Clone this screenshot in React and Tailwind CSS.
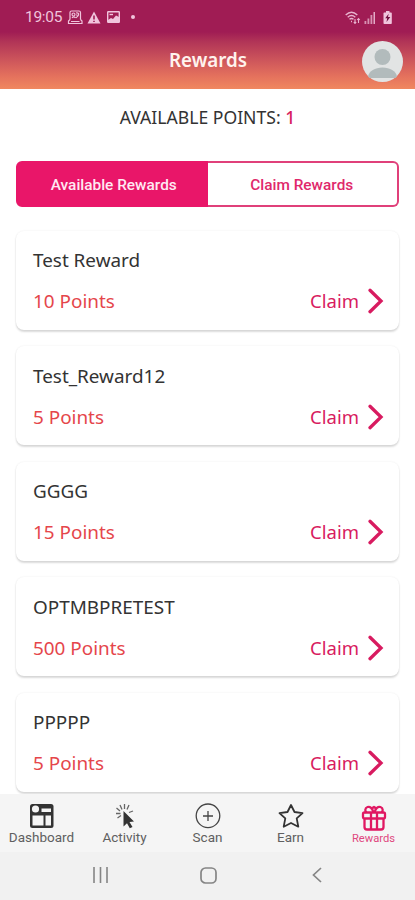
import React from "react";

const rewards = [
  { name: "Test Reward", points: "10 Points" },
  { name: "Test_Reward12", points: "5 Points" },
  { name: "GGGG", points: "15 Points" },
  { name: "OPTMBPRETEST", points: "500 Points" },
  { name: "PPPPP", points: "5 Points" },
];

function StatusBar() {
  return (
    <div className="flex h-[34px] items-center justify-between pl-[25px] pr-[22px] text-[#f0c4dc]">
      <div className="flex items-center">
        <span className="w-[38px] whitespace-nowrap pt-[2px] font-['Roboto',sans-serif] text-[15.5px] leading-none tracking-[-0.3px]">19:05</span>
        <svg className="ml-[4px]" width="17" height="15" viewBox="0 0 17 15" fill="none" stroke="currentColor" strokeWidth="1.2">
          <path d="M3 9.500V2.500Q3 1 4.500 1h7.500q1.500 0 1.500 1.500v7M3 9.500L1.500 11v2.500h13.500V11l-1.500-1.500M4 11.500h8.500" />
          <circle cx="6.500" cy="4.500" r="1.500" />
          <path d="M5 8c1-1.500 2.500-1.500 3.500 0M9 3c2-.5 3 .5 2.500 2S9.500 7 9 8M9 5h1.500" />
        </svg>
        <svg className="ml-[3px]" width="14" height="13" viewBox="0 0 14 13">
          <path d="M7 .5L13.500 12.500H.5z" fill="currentColor" />
          <path d="M7 4.500v4M7 9.700v1.300" stroke="#a01c54" strokeWidth="1.600" />
        </svg>
        <svg className="ml-[6px]" width="13" height="12" viewBox="0 0 13 12">
          <rect x=".7" y=".7" width="11.600" height="10.600" rx=".5" fill="none" stroke="currentColor" strokeWidth="1.400" />
          <path d="M1 9l3-2 2 1 3-3.500 3 1.500v5H1z" fill="currentColor" />
          <path d="M2.500 3.500h3.500" stroke="currentColor" strokeWidth="1.400" />
        </svg>
        <span className="ml-[11px] size-[4px] rounded-full bg-[#f0c4dc]" />
      </div>
      <div className="flex items-center">
        <svg width="16" height="13" viewBox="0 0 16 13" fill="none" stroke="currentColor" strokeWidth="1.400" opacity=".9">
          <path d="M.7 4Q6.500-1.500 12.300 4M2.700 6.200q3.800-3.200 7.600 0M4.500 8.300q2-1.500 4 0M6 10.500h1" />
          <path d="M10 12.500V8M8.800 11l1.200 1.500 1.200-1.500M13.500 7.500V12M12.200 9l1.300-1.500L14.800 9" strokeWidth="1.100" />
        </svg>
        <svg className="ml-[3px]" width="12" height="13" viewBox="0 0 12 13" fill="currentColor">
          <path d="M.5 10h1.800v3H.5zM3.500 7.500h1.800V13H3.500zM6.500 4h1.800v9H6.500z" opacity=".7" />
          <path d="M9.500 1h1.500v12H9.500z" opacity=".85" />
        </svg>
        <svg className="ml-[7px]" width="10" height="13" viewBox="0 0 10 13">
          <path d="M3 0h3.500v1.500H8q.8 0 .8.800v9.900q0 .8-.8.800H1.300q-.8 0-.8-.8V2.300q0-.8.800-.8H3z" fill="currentColor" />
          <path d="M5.700 2.700L2.200 7.300h2l-.7 3.600L7.300 6H5z" fill="#701040" />
        </svg>
      </div>
    </div>
  );
}

function Header() {
  return (
    <header className="h-[89px] shrink-0 bg-[linear-gradient(to_bottom,#a01c54_0px,#a01c54_32px,#b23557_42px,#cd555b_60px,#e4715d_76px,#f08860_89px)]">
      <StatusBar />
      <div className="grid h-[55px] grid-cols-[1fr_auto_1fr] items-center pr-[12px]">
        <span />
        <h1 className="pb-[2px] pl-[13px] font-['Noto_Sans',sans-serif] text-[18.800px] font-semibold text-[#fff3ee]">Rewards</h1>
        <svg className="justify-self-end" width="41" height="41" viewBox="0 0 41 41">
          <circle cx="20.500" cy="20.500" r="20.500" fill="#e2e4e4" />
          <circle cx="20.500" cy="16" r="8" fill="#b2bbbc" />
          <path d="M6 35.500c1-5.500 7-9 14.500-9s13.500 3.500 14.500 9a20.500 20.500 0 0 1-1.500 1.500H7.500a20.500 20.500 0 0 1-1.500-1.500z" fill="#b2bbbc" />
        </svg>
      </div>
    </header>
  );
}

function RewardCard({ name, points }) {
  return (
    <li className="flex h-[99px] shrink-0 flex-col rounded-[8px] bg-white pl-[17px] pr-[15px] pt-[16.400px] font-['Noto_Sans',sans-serif] text-[18.900px] shadow-[0_2px_2px_rgba(0,0,0,0.14),0_0_2px_rgba(0,0,0,0.08)]">
      <span className="h-[26px] leading-[26px] text-[#333]">{name}</span>
      <div className="mt-[15px] flex h-[26px] items-center leading-[26px]">
        <span className="text-[#e5464b]">{points}</span>
        <span className="ml-auto text-[18.500px] text-[#d81b60]">Claim</span>
        <svg className="ml-[9px]" width="16" height="26" viewBox="0 0 16 26" fill="none" stroke="#d81b60" strokeWidth="3.300" strokeLinecap="round">
          <path d="M2 2.300L13 13 2 23.700" />
        </svg>
      </div>
    </li>
  );
}

function DashboardIcon() {
  return (
    <svg width="26" height="26" viewBox="0 0 26 26">
      <rect x="1" y="1" width="23.500" height="24" rx="2.500" fill="#333" />
      <circle cx="6.500" cy="6" r="3.600" fill="#f5f5f5" />
      <path d="M12.500 5.500H22V9h-9.500zM3.500 12.500h11v10h-11zM16.500 12.500H22v10h-5.500z" fill="#f5f5f5" />
    </svg>
  );
}

function ActivityIcon() {
  return (
    <svg width="26" height="26" viewBox="0 0 26 26">
      <path d="M12.500 1v5M8 2l2 4.500M17 2l-2 4.500M4.500 5l3.500 3M4 10.500h4.500M5.500 15l3.500-2.500M21 8l-4 1.500" stroke="#666" strokeWidth="1.300" fill="none" />
      <path d="M11.500 8L22 18.500l-4.500.5 3 5-2.700 1.300-2.800-5-3.500 3.200z" fill="#333" />
    </svg>
  );
}

function ScanIcon() {
  return (
    <svg width="26" height="26" viewBox="0 0 26 26" fill="none" stroke="#444" strokeWidth="1.300">
      <circle cx="13" cy="12.800" r="11.800" />
      <path d="M13 8v10M8 13h10" />
    </svg>
  );
}

function EarnIcon() {
  return (
    <svg width="26" height="26" viewBox="0 0 26 26" fill="none" stroke="#333" strokeWidth="1.800" strokeLinejoin="round">
      <path d="M13 2l3.500 7 8 1.100-5.800 5.300 1.600 8.300-7.300-3.700-7.300 3.700 1.600-8.300-5.800-5.300 8-1.100z" />
    </svg>
  );
}

function GiftIcon() {
  return (
    <svg className="relative top-[1.500px]" width="26" height="26" viewBox="0 0 26 26" fill="none" stroke="#e01862" strokeWidth="2.300" strokeLinejoin="round">
      <path d="M3.500 7.500h19q1.500 0 1.500 1.500v3q0 1.500-1.500 1.500h-19Q2 13.500 2 12V9Q2 7.500 3.500 7.500zM3.500 13.500h19V22q0 2.500-2.500 2.500H6q-2.500 0-2.500-2.500zM10 7.500v17M16 7.500v17" />
      <path d="M12.500 7.500C11.500 3 9 1.200 6.500 2 3.500 3 4 6.500 5.500 7.500M13.500 7.500C14.500 3 17 1.200 19.500 2c3 1 2.500 4.500 1 5.500M10.500 3.500L13 2l2.500 1.500" />
    </svg>
  );
}

const tabs = [
  { label: "Dashboard", Icon: DashboardIcon },
  { label: "Activity", Icon: ActivityIcon },
  { label: "Scan", Icon: ScanIcon },
  { label: "Earn", Icon: EarnIcon },
  { label: "Rewards", Icon: GiftIcon, active: true },
];

export default function App() {
  return (
    <div className="flex h-[900px] w-[415px] flex-col overflow-hidden bg-white">
      <Header />
      <main className="flex h-[705px] shrink-0 flex-col overflow-hidden px-[16px]">
        <p className="mt-[15px] h-[26px] text-center font-['Noto_Sans',sans-serif] text-[17.600px] leading-[26px] text-[#333]">
          AVAILABLE POINTS: <span className="font-medium text-[#d81b60]">1</span>
        </p>
        <div className="mt-[31px] grid h-[46px] shrink-0 grid-cols-2 font-['Roboto',sans-serif] text-[15.400px] font-medium">
          <button className="rounded-l-[6px] border-2 border-[#e91669] bg-[#e91669] pl-[4px] pt-[3px] text-[#ffe9f2]">Available Rewards</button>
          <button className="rounded-r-[6px] border-2 border-l-0 border-[#e0407a] bg-white pr-[1px] pt-[3px] text-[#e0286b]">Claim Rewards</button>
        </div>
        <ul className="mt-[24px] flex flex-col gap-[16.400px]">
          {rewards.map((r) => <RewardCard key={r.name} {...r} />)}
        </ul>
      </main>
      <nav className="grid h-[58px] shrink-0 grid-cols-5 bg-[#f5f5f5] pt-[9px]">
        {tabs.map(({ label, Icon, active }) => (
          <div key={label} className="flex flex-col items-center">
            <Icon />
            <span className={active ? "mt-[1.500px] whitespace-nowrap font-['Roboto',sans-serif] text-[11.200px] leading-[16px] text-[#e0487f]" : "whitespace-nowrap font-['Roboto',sans-serif] text-[13.500px] leading-[16px] text-[#606060]"}>{label}</span>
          </div>
        ))}
      </nav>
      <div className="flex h-[48px] shrink-0 items-center bg-[#f1f1f1] pb-[2px] pl-[92px] text-[#858585]">
        <svg width="17" height="16" viewBox="0 0 17 16" stroke="currentColor" strokeWidth="1.600"><path d="M2 0v16M8.500 0v16M15 0v16" /></svg>
        <svg className="ml-[91px]" width="17" height="17" viewBox="0 0 17 17" fill="none" stroke="currentColor" strokeWidth="1.700"><rect x="1" y="1" width="15" height="15" rx="4.500" /></svg>
        <svg className="ml-[95px]" width="10" height="16" viewBox="0 0 10 16" fill="none" stroke="currentColor" strokeWidth="1.700"><path d="M9 1L1.500 8 9 15" /></svg>
      </div>
    </div>
  );
}
